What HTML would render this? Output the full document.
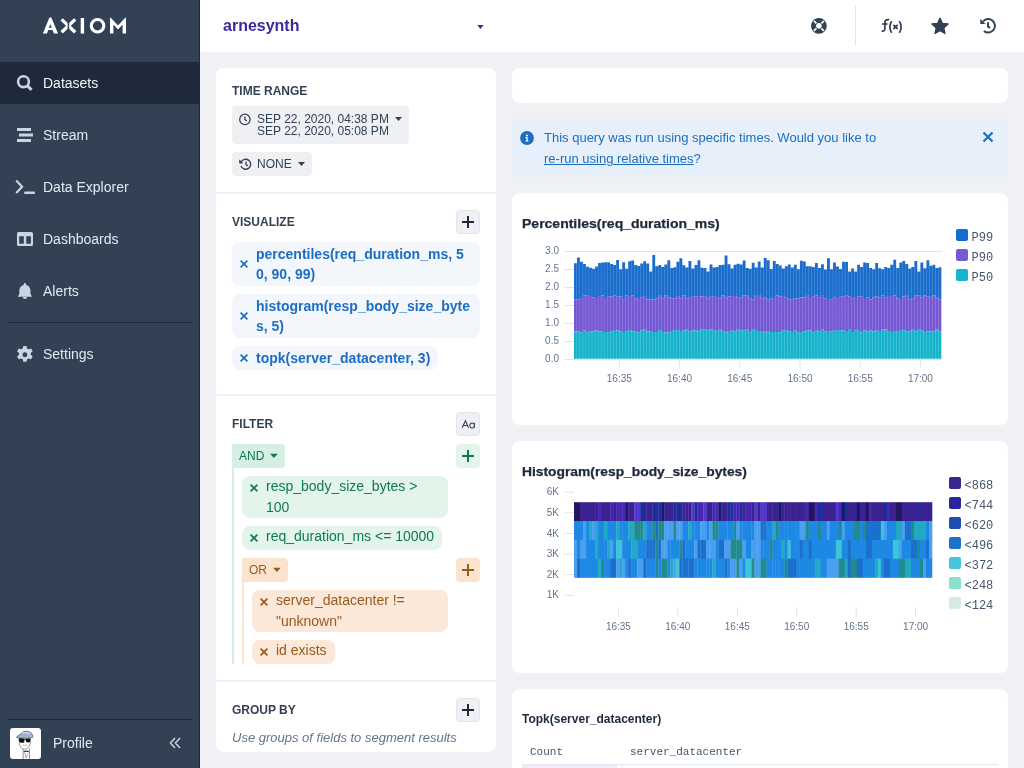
<!DOCTYPE html>
<html><head><meta charset="utf-8">
<style>
*{box-sizing:border-box;margin:0;padding:0}
html,body{width:1024px;height:768px;overflow:hidden;background:#eff1f5;font-family:"Liberation Sans", sans-serif;}
.abs{position:absolute}
.t{position:absolute;white-space:nowrap;line-height:1}
#side{position:absolute;left:0;top:0;width:200px;height:768px;background:#334155}
.nav{position:absolute;left:43px;font-size:14px;color:#e2e8f0;line-height:16px}
#head{position:absolute;left:200px;top:0;width:824px;height:52px;background:#fff}
.card{position:absolute;background:#fff;border-radius:8px}
.lbl{position:absolute;font-size:12px;font-weight:700;color:#334155;line-height:16px;left:232px}
.btn{position:absolute;background:#eef0f4;border-radius:4px}
.pbtn{position:absolute;width:24px;height:24px;border-radius:4px;background:#eef0f4;border:1px solid #e2e5ea}
.vchip{position:absolute;left:232px;background:#f3f7fc;border-radius:8px;color:#1b6ec2;font-weight:700;font-size:14px;line-height:20px}
.sep{position:absolute;left:216px;width:280px;height:2px;background:#eef0f4}
.ylab{position:absolute;font-size:10px;color:#64748b;line-height:12px;text-align:right;width:30px}
.xlab{position:absolute;font-size:10px;color:#64748b;line-height:12px;text-align:center;width:40px}
.leg{position:absolute;font-family:"Liberation Mono", monospace;font-size:12px;color:#475569;line-height:14px}
.sq{position:absolute;width:12px;height:12px;border-radius:2px}
</style></head><body>
<div id="root" style="position:absolute;left:0;top:0;width:1024px;height:768px;will-change:transform">
<div id="side">
  <svg class="abs" style="left:0;top:0" width="200" height="60">
    <path fill="#fff" fill-rule="evenodd" d="M42.9 33.6 L49.4 17.6 L51.3 17.6 L58 33.6 L53.9 33.6 L52.6 30 L48.2 30 L47 33.6 Z M50.35 24.2 L51.8 27.8 L48.9 27.8 Z"/>
    <defs><clipPath id="xl"><rect x="55" y="10" width="12.6" height="30"/></clipPath><clipPath id="xr"><rect x="69.2" y="10" width="12" height="30"/></clipPath></defs>
    <g stroke="#fff" stroke-width="3.3" fill="none" stroke-linejoin="miter">
      <path d="M61.6 19.4 L68.4 25.8 L61.6 32.2" clip-path="url(#xl)"/>
      <path d="M75.2 19.4 L68.4 25.8 L75.2 32.2" clip-path="url(#xr)"/>
    </g>
    <rect x="67.9" y="25.3" width="1" height="1" fill="#fff" opacity="0.45"/>
    <rect x="80.7" y="18" width="3.4" height="15.6" fill="#fff"/>
    <circle cx="97.55" cy="25.8" r="6.25" stroke="#fff" stroke-width="3.1" fill="none"/>
    <path d="M110 33.6 V17.8 H110.8 L118 25.4 L125.2 17.8 H126 V33.6 H122.6 V24.6 L118 29.6 L113.4 24.6 V33.6 Z" fill="#fff"/>
  </svg>
  <div class="abs" style="left:0;top:62px;width:200px;height:42px;background:#1e293b"></div>
  <svg class="abs" style="left:0;top:0" width="200" height="768">
    <g fill="none" stroke="#cbd5e1">
      <circle cx="23.5" cy="81.7" r="5.4" stroke-width="2.6"/>
      <path d="M27.5 85.7 L31.5 89.9" stroke-width="3"/>
      <path d="M16.8 186.8" />
      <path d="M16.2 180.6 L22.1 186.8 L16.2 193" stroke-width="2.2"/>
    </g>
    <g fill="#cbd5e1">
      <rect x="17" y="128" width="14" height="3"/>
      <rect x="19" y="133.5" width="14" height="3"/>
      <rect x="17" y="139" width="14" height="3"/>
      <rect x="24.1" y="191.6" width="10.9" height="2.3" rx="1"/>
      <path fill-rule="evenodd" d="M18.6 232 h12.8 a1.6 1.6 0 0 1 1.6 1.6 v10.8 a1.6 1.6 0 0 1 -1.6 1.6 h-12.8 a1.6 1.6 0 0 1 -1.6 -1.6 v-10.8 a1.6 1.6 0 0 1 1.6 -1.6 Z M19.2 236.2 v7.6 h4.6 v-7.6 Z M26.3 236.2 v7.6 h4.6 v-7.6 Z"/>
      <path d="M24.9 283 a1.2 1.2 0 0 1 1.2 1.2 v0.8 c2.8 0.6 4.4 3 4.4 6 v3 l1.5 2.8 h-14.2 l1.5 -2.8 v-3 c0 -3 1.6 -5.4 4.4 -6 v-0.8 a1.2 1.2 0 0 1 1.2 -1.2 Z M22.8 297 h4.2 a2.1 2.1 0 0 1 -4.2 0 Z"/>
      <g transform="translate(24.9 354.7) scale(1.1) translate(-24.9 -354)"><path fill-rule="evenodd" d="M23.4 346 h3 l0.5 2.3 l1.4 0.8 l2.2 -0.8 l1.5 2.6 l-1.8 1.5 v1.7 l1.8 1.5 l-1.5 2.6 l-2.2 -0.8 l-1.4 0.8 l-0.5 2.3 h-3 l-0.5 -2.3 l-1.4 -0.8 l-2.2 0.8 l-1.5 -2.6 l1.8 -1.5 v-1.7 l-1.8 -1.5 l1.5 -2.6 l2.2 0.8 l1.4 -0.8 Z M24.9 351.8 a2.2 2.2 0 1 0 0.001 0 Z"/></g>
    </g>
    <rect x="7" y="322" width="186" height="1" fill="#1e293b"/>
    <rect x="7" y="719" width="186" height="1" fill="#1e293b"/>
  </svg>
  <div class="nav" style="top:75px;color:#f1f5f9">Datasets</div>
  <div class="nav" style="top:127px">Stream</div>
  <div class="nav" style="top:179px">Data Explorer</div>
  <div class="nav" style="top:231px">Dashboards</div>
  <div class="nav" style="top:283px">Alerts</div>
  <div class="nav" style="top:346px">Settings</div>
  <div class="abs" style="left:10px;top:728px;width:31px;height:31px;background:#fff;border-radius:3px;overflow:hidden">
    <svg width="31" height="31">
      <path d="M6.4 9.6 C7.5 7.5 9 6.8 10.5 6.5 C11.5 4 14 3 17.5 3.4 C21 3.8 23 6 22.6 9.5 C20 10.5 12 10.2 6.4 9.6 Z" fill="#9fb4d2" stroke="#3d4f6e" stroke-width="0.7"/>
      <path d="M12 5 C14 4.2 18 4.5 20 6" fill="none" stroke="#dfe8f4" stroke-width="1"/>
      <path d="M8.5 10.5 C10 10 13 10.3 14.6 10.8 L14.2 14.2 C13 15 10 15 9.2 14 Z" fill="#111"/>
      <path d="M15.6 10.8 C17 10.4 19.5 10.3 20.8 10.8 L20.4 13.8 C19.5 14.6 17 14.6 16 13.8 Z" fill="#111"/>
      <path d="M14.4 11.5 H15.8" stroke="#111" stroke-width="1"/>
      <path d="M9.2 14.5 C9.5 18.5 11.5 21 14.5 21.2 C17.5 21.2 19.8 18.8 20.5 14" fill="none" stroke="#666" stroke-width="0.7"/>
      <path d="M12.6 16.8 C13.6 17.6 15.6 17.6 16.8 16.6" fill="none" stroke="#777" stroke-width="0.6"/>
      <path d="M13.2 21 V31 M19.5 20.5 V31" stroke="#666" stroke-width="0.7"/>
      <path d="M14 24 C15 22.8 17.5 22.8 18.8 24" fill="none" stroke="#2a3550" stroke-width="1.2"/>
      <path d="M15 25 L16 30 L17.5 26" fill="none" stroke="#8a96b0" stroke-width="0.8"/>
    </svg>
  </div>
  <div class="nav" style="left:53px;top:735px">Profile</div>
  <svg class="abs" style="left:168px;top:736px" width="14" height="14">
    <path d="M6.6 2.4 L2.4 7 L6.6 11.5 M11.6 2.4 L7.4 7 L11.6 11.5" fill="none" stroke="#cbd5e1" stroke-width="1.5" stroke-linecap="round" stroke-linejoin="round"/>
  </svg>
  <div class="abs" style="left:199px;top:0;width:1px;height:768px;background:#1e293b"></div>
</div>

<div id="head">
  <div class="t" style="left:23px;top:17px;font-size:16px;font-weight:700;color:#3b2a9e;line-height:18px">arnesynth</div>
  <svg class="abs" style="left:276px;top:23.5px" width="12" height="8"><path d="M1.3 1.1 h6.3 l-3.15 3.9 Z" fill="#3b2a9e"/></svg>
  <svg class="abs" style="left:600px;top:0" width="224" height="52">
    <g transform="translate(-800,0)">
      <path fill="#334155" fill-rule="evenodd" d="M818.9 18 a7.85 7.85 0 1 0 0.001 0 Z M818.9 23 a2.9 2.9 0 1 1 -0.001 0 Z"/>
      <g stroke="#fff" stroke-width="1.7">
        <path d="M813.9 20.9 L816.4 23.4 M823.9 20.9 L821.4 23.4 M813.9 30.9 L816.4 28.4 M823.9 30.9 L821.4 28.4"/>
      </g>
      <rect x="855" y="6" width="1" height="40" fill="#e4e4ec"/>
      <g fill="none" stroke="#334155" stroke-width="1.7" stroke-linecap="round">
        <path d="M888.6 19.6 C886.2 19.4 884.9 20.6 884.9 22.6 V28.6 C884.9 30.6 883.8 31.3 882.4 31.2"/>
        <path d="M882.2 24 H887.5" stroke-linecap="butt"/>
        <path d="M891.4 21.8 C889.4 24.5 889.4 29.5 891.4 32.2"/>
        <path d="M899.6 21.8 C901.6 24.5 901.6 29.5 899.6 32.2"/>
        <path d="M893.9 25.4 L897.1 28.4 M897.1 25.4 L893.9 28.4" stroke-width="1.9"/>
      </g>
      <path fill="#334155" stroke="#334155" stroke-width="1.2" stroke-linejoin="round" d="M940.00 18.00 L942.41 23.28 L948.18 23.94 L943.90 27.87 L945.05 33.56 L940.00 30.70 L934.95 33.56 L936.10 27.87 L931.82 23.94 L937.59 23.28 Z"/>
      <g fill="none" stroke="#334155" stroke-width="2">
        <path d="M983.2 21.4 A6.7 6.7 0 1 1 983.9 30.9"/>
        <path d="M988 22.3 V26.4 L990 28"/>
      </g>
      <path d="M980.3 18.8 L980.3 24 L985.6 24 Z" fill="#334155"/>
    </g>
  </svg>
</div>

<!-- left card -->
<div class="card" style="left:216px;top:68px;width:280px;height:684px"></div>
<div class="lbl" style="top:83px">TIME RANGE</div>
<div class="btn" style="left:232px;top:106px;width:177px;height:38px"></div>
<svg class="abs" style="left:236px;top:111px" width="16" height="16"><circle cx="8.9" cy="8.4" r="5.2" fill="none" stroke="#334155" stroke-width="1.25"/><path d="M8.9 5.6 V8.6 L10.9 10" fill="none" stroke="#334155" stroke-width="1.2"/></svg>
<div class="t" style="left:257px;top:113px;font-size:12px;color:#334155;line-height:12px">SEP 22, 2020, 04:38 PM<br>SEP 22, 2020, 05:08 PM</div>
<svg class="abs" style="left:394px;top:116.4px" width="10" height="6"><path d="M1 1 h7 l-3.5 4 Z" fill="#334155"/></svg>
<div class="btn" style="left:232px;top:152px;width:80px;height:24px"></div>
<svg class="abs" style="left:236.5px;top:155.5px" width="16" height="16"><path d="M4.2 6 A5 5 0 1 1 4 10" fill="none" stroke="#334155" stroke-width="1.4"/><path d="M2.2 3.2 L2.2 7.4 L6.2 7.4 Z" fill="#334155"/><path d="M9 5.6 V8.6 L11 10" fill="none" stroke="#334155" stroke-width="1.3"/></svg>
<div class="t" style="left:257px;top:157.5px;font-size:12px;color:#334155;line-height:12px">NONE</div>
<svg class="abs" style="left:296.5px;top:161px" width="10" height="6"><path d="M1 1 h7 l-3.5 4 Z" fill="#334155"/></svg>
<div class="sep" style="top:192px"></div>

<div class="lbl" style="top:214px">VISUALIZE</div>
<div class="pbtn" style="left:456px;top:210px"></div>
<svg class="abs" style="left:456px;top:210px" width="24" height="24"><path d="M12 6 V18 M6 12 H18" stroke="#1e293b" stroke-width="2"/></svg>
<div class="vchip" style="top:242px;width:248px;height:44px"></div>
<div class="vchip" style="top:294px;width:248px;height:44px"></div>
<div class="vchip" style="top:346px;width:206px;height:24px"></div>
<svg class="abs" style="left:232px;top:242px" width="30" height="130">
  <g stroke="#1b6ec2" stroke-width="1.7">
    <path d="M8.6 18.6 L15.4 25.4 M15.4 18.6 L8.6 25.4"/>
    <path d="M8.6 70.6 L15.4 77.4 M15.4 70.6 L8.6 77.4"/>
    <path d="M8.6 112.6 L15.4 119.4 M15.4 112.6 L8.6 119.4"/>
  </g>
</svg>
<div class="t" style="left:256px;top:244px;font-size:14px;font-weight:700;color:#1b6ec2;line-height:20px">percentiles(req_duration_ms, 5<br>0, 90, 99)</div>
<div class="t" style="left:256px;top:296px;font-size:14px;font-weight:700;color:#1b6ec2;line-height:20px">histogram(resp_body_size_byte<br>s, 5)</div>
<div class="t" style="left:256px;top:348px;font-size:14px;font-weight:700;color:#1b6ec2;line-height:20px">topk(server_datacenter, 3)</div>
<div class="sep" style="top:394px"></div>

<div class="lbl" style="top:416px">FILTER</div>
<div class="pbtn" style="left:456px;top:412px"></div>
<svg class="abs" style="left:456px;top:412px" width="24" height="24"><g fill="none" stroke="#334155" stroke-width="1.05"><path d="M6.2 15.8 L9.4 8.8 L12.6 15.8 M7.4 13.4 H11.4"/><path d="M18.4 10.8 V15.8 M18.4 13.3 A2.3 2.5 0 1 1 18.39 13.2"/></g></svg>
<div class="abs" style="left:232px;top:444px;width:53px;height:24px;background:#d5efe2;border-radius:0 4px 4px 0"></div>
<div class="t" style="left:239px;top:450px;font-size:12px;color:#0f7b4d;line-height:12px">AND</div>
<svg class="abs" style="left:269.4px;top:453.2px" width="10" height="6"><path d="M1 0.8 h7.8 l-3.9 4.3 Z" fill="#0f7b4d"/></svg>
<div class="abs" style="left:456px;top:444px;width:24px;height:24px;background:#e3f4ea;border-radius:4px"></div>
<svg class="abs" style="left:456px;top:444px" width="24" height="24"><path d="M12 6 V18 M6 12 H18" stroke="#0f7b4d" stroke-width="2"/></svg>
<div class="abs" style="left:232px;top:468px;width:2px;height:196px;background:#d5efe2"></div>
<div class="abs" style="left:242px;top:476px;width:206px;height:42px;background:#e3f4ea;border-radius:8px"></div>
<div class="abs" style="left:242px;top:526px;width:200px;height:24px;background:#e3f4ea;border-radius:8px"></div>
<svg class="abs" style="left:242px;top:476px" width="24" height="80"><g stroke="#0f7b4d" stroke-width="1.7"><path d="M8.6 8.6 L15.4 15.4 M15.4 8.6 L8.6 15.4"/><path d="M8.6 58.6 L15.4 65.4 M15.4 58.6 L8.6 65.4"/></g></svg>
<div class="t" style="left:266px;top:476px;font-size:14px;color:#0f7b4d;line-height:20px">resp_body_size_bytes &gt;</div>
<div class="t" style="left:266px;top:497px;font-size:14px;color:#0f7b4d;line-height:20px">100</div>
<div class="t" style="left:266px;top:526px;font-size:14px;color:#0f7b4d;line-height:20px">req_duration_ms &lt;= 10000</div>
<div class="abs" style="left:242px;top:558px;width:46px;height:24px;background:#fbe3cd;border-radius:0 4px 4px 0"></div>
<div class="t" style="left:249px;top:564px;font-size:12px;color:#9a5a1e;line-height:12px">OR</div>
<svg class="abs" style="left:271.9px;top:567.3px" width="10" height="6"><path d="M1 0.8 h7.8 l-3.9 4.3 Z" fill="#9a5a1e"/></svg>
<div class="abs" style="left:456px;top:558px;width:24px;height:24px;background:#fbe3cd;border-radius:4px"></div>
<svg class="abs" style="left:456px;top:558px" width="24" height="24"><path d="M12 6 V18 M6 12 H18" stroke="#9a5a1e" stroke-width="2"/></svg>
<div class="abs" style="left:242px;top:582px;width:2px;height:82px;background:#fbe3cd"></div>
<div class="abs" style="left:252px;top:590px;width:196px;height:42px;background:#fbe8d8;border-radius:8px"></div>
<div class="abs" style="left:252px;top:640px;width:83px;height:24px;background:#fbe8d8;border-radius:8px"></div>
<svg class="abs" style="left:252px;top:590px" width="24" height="80"><g stroke="#9a5a1e" stroke-width="1.7"><path d="M8.6 8.6 L15.4 15.4 M15.4 8.6 L8.6 15.4"/><path d="M8.6 58.6 L15.4 65.4 M15.4 58.6 L8.6 65.4"/></g></svg>
<div class="t" style="left:276px;top:590px;font-size:14px;color:#9a5a1e;line-height:20px">server_datacenter !=</div>
<div class="t" style="left:276px;top:611px;font-size:14px;color:#9a5a1e;line-height:20px">"unknown"</div>
<div class="t" style="left:276px;top:640px;font-size:14px;color:#9a5a1e;line-height:20px">id exists</div>
<div class="sep" style="top:680px"></div>

<div class="lbl" style="top:702px">GROUP BY</div>
<div class="pbtn" style="left:456px;top:698px"></div>
<svg class="abs" style="left:456px;top:698px" width="24" height="24"><path d="M12 6 V18 M6 12 H18" stroke="#1e293b" stroke-width="2"/></svg>
<div class="t" style="left:232px;top:731px;font-size:13px;font-style:italic;color:#64748b;line-height:14px">Use groups of fields to segment results</div>

<!-- right column -->
<div class="card" style="left:512px;top:68px;width:496px;height:35px"></div>
<div class="abs" style="left:512px;top:119px;width:496px;height:58px;background:#e7f0fa;border-radius:8px"></div>
<svg class="abs" style="left:519px;top:130px" width="16" height="16"><circle cx="8" cy="8" r="6.9" fill="#1b6ec2"/><path d="M6.4 7.1 H8.7 V10.6 H9.5 V11.6 H6.5 V10.6 H7.3 V8.1 H6.4 Z" fill="#fff"/><circle cx="7.9" cy="5.5" r="1" fill="#fff"/></svg>
<div class="t" style="left:544px;top:130px;font-size:13px;color:#1b6ec2;line-height:16px">This query was run using specific times. Would you like to</div>
<div class="t" style="left:544px;top:151px;font-size:13px;color:#1b6ec2;line-height:16px"><span style="text-decoration:underline">re-run using relative times</span>?</div>
<svg class="abs" style="left:980px;top:129px" width="16" height="16"><path d="M3.5 3.5 L12.5 12.5 M12.5 3.5 L3.5 12.5" stroke="#1b6ec2" stroke-width="2.2"/></svg>

<div class="card" style="left:512px;top:193px;width:496px;height:232px"></div>
<div class="t" style="left:522px;top:215.5px;font-size:12px;font-weight:700;color:#1e293b;line-height:16px;transform:scaleX(1.167);transform-origin:0 0;-webkit-text-stroke:0.25px #1e293b">Percentiles(req_duration_ms)</div>
<svg width="1024" height="768" style="position:absolute;left:0;top:0"><rect x="564.5" y="359" width="377" height="1" fill="#e3e3e3"/><rect x="564.5" y="341" width="377" height="1" fill="#e3e3e3"/><rect x="564.5" y="323" width="377" height="1" fill="#e3e3e3"/><rect x="564.5" y="305" width="377" height="1" fill="#e3e3e3"/><rect x="564.5" y="287" width="377" height="1" fill="#e3e3e3"/><rect x="564.5" y="269" width="377" height="1" fill="#e3e3e3"/><rect x="564.5" y="251" width="377" height="1" fill="#e3e3e3"/><path d="M574.00 263.3h2.86V299.3h-2.86ZM577.01 257.4h2.86V299.7h-2.86ZM580.02 261.7h2.86V297.9h-2.86ZM583.04 264.0h2.86V295.2h-2.86ZM586.05 266.7h2.86V295.7h-2.86ZM589.06 267.7h2.86V295.9h-2.86ZM592.07 268.8h2.86V297.3h-2.86ZM595.09 266.5h2.86V297.9h-2.86ZM598.10 262.9h2.86V296.0h-2.86ZM601.11 262.6h2.86V295.6h-2.86ZM604.12 262.3h2.86V297.9h-2.86ZM607.14 262.3h2.86V296.7h-2.86ZM610.15 263.9h2.86V296.5h-2.86ZM613.16 265.0h2.86V295.3h-2.86ZM616.17 260.1h2.86V296.8h-2.86ZM619.18 269.2h2.86V296.6h-2.86ZM622.20 262.2h2.86V299.7h-2.86ZM625.21 268.7h2.86V295.6h-2.86ZM628.22 261.3h2.86V295.9h-2.86ZM631.23 260.5h2.86V295.6h-2.86ZM634.25 264.9h2.86V298.8h-2.86ZM637.26 266.0h2.86V297.9h-2.86ZM640.27 263.6h2.86V297.4h-2.86ZM643.28 261.2h2.86V296.1h-2.86ZM646.30 263.5h2.86V299.5h-2.86ZM649.31 271.6h2.86V299.2h-2.86ZM652.32 255.0h2.86V299.5h-2.86ZM655.33 266.2h2.86V298.7h-2.86ZM658.34 265.1h2.86V295.0h-2.86ZM661.36 266.9h2.86V298.3h-2.86ZM664.37 264.5h2.86V295.2h-2.86ZM667.38 260.3h2.86V297.4h-2.86ZM670.39 267.9h2.86V298.2h-2.86ZM673.41 267.3h2.86V298.4h-2.86ZM676.42 261.8h2.86V296.0h-2.86ZM679.43 258.2h2.86V298.2h-2.86ZM682.44 265.2h2.86V295.2h-2.86ZM685.45 267.4h2.86V298.2h-2.86ZM688.47 261.0h2.86V296.9h-2.86ZM691.48 268.6h2.86V296.0h-2.86ZM694.49 264.9h2.86V296.2h-2.86ZM697.50 260.3h2.86V296.0h-2.86ZM700.52 267.8h2.86V296.4h-2.86ZM703.53 268.1h2.86V296.0h-2.86ZM706.54 271.6h2.86V298.3h-2.86ZM709.55 264.5h2.86V296.7h-2.86ZM712.57 267.4h2.86V295.9h-2.86ZM715.58 267.0h2.86V297.1h-2.86ZM718.59 265.1h2.86V298.2h-2.86ZM721.60 264.7h2.86V295.4h-2.86ZM724.61 255.4h2.86V297.8h-2.86ZM727.63 264.2h2.86V296.4h-2.86ZM730.64 268.4h2.86V296.1h-2.86ZM733.65 264.7h2.86V296.1h-2.86ZM736.66 263.7h2.86V297.8h-2.86ZM739.68 264.4h2.86V297.7h-2.86ZM742.69 260.6h2.86V295.6h-2.86ZM745.70 268.1h2.86V295.8h-2.86ZM748.71 268.7h2.86V298.8h-2.86ZM751.73 262.7h2.86V299.2h-2.86ZM754.74 267.4h2.86V295.1h-2.86ZM757.75 261.6h2.86V295.0h-2.86ZM760.76 267.6h2.86V298.3h-2.86ZM763.77 257.9h2.86V297.2h-2.86ZM766.79 260.2h2.86V299.7h-2.86ZM769.80 269.0h2.86V298.7h-2.86ZM772.81 260.9h2.86V297.9h-2.86ZM775.82 264.1h2.86V295.4h-2.86ZM778.84 265.4h2.86V296.6h-2.86ZM781.85 268.6h2.86V296.0h-2.86ZM784.86 266.2h2.86V297.7h-2.86ZM787.87 264.5h2.86V299.4h-2.86ZM790.89 267.5h2.86V299.8h-2.86ZM793.90 264.7h2.86V298.6h-2.86ZM796.91 269.3h2.86V298.8h-2.86ZM799.92 260.7h2.86V297.6h-2.86ZM802.93 261.6h2.86V297.5h-2.86ZM805.95 266.2h2.86V295.1h-2.86ZM808.96 266.2h2.86V298.0h-2.86ZM811.97 267.0h2.86V296.3h-2.86ZM814.98 263.1h2.86V295.6h-2.86ZM818.00 267.9h2.86V297.7h-2.86ZM821.01 264.3h2.86V295.1h-2.86ZM824.02 269.4h2.86V298.2h-2.86ZM827.03 258.3h2.86V299.0h-2.86ZM830.05 269.2h2.86V299.8h-2.86ZM833.06 262.4h2.86V297.4h-2.86ZM836.07 266.4h2.86V298.1h-2.86ZM839.08 269.0h2.86V296.8h-2.86ZM842.09 261.8h2.86V296.3h-2.86ZM845.11 261.9h2.86V295.8h-2.86ZM848.12 271.6h2.86V296.6h-2.86ZM851.13 268.4h2.86V298.2h-2.86ZM854.14 271.6h2.86V296.9h-2.86ZM857.16 264.7h2.86V296.2h-2.86ZM860.17 267.1h2.86V296.3h-2.86ZM863.18 262.5h2.86V299.0h-2.86ZM866.19 263.0h2.86V297.6h-2.86ZM869.20 268.0h2.86V299.6h-2.86ZM872.22 269.3h2.86V297.2h-2.86ZM875.23 263.1h2.86V296.5h-2.86ZM878.24 268.3h2.86V297.7h-2.86ZM881.25 269.3h2.86V295.3h-2.86ZM884.27 266.9h2.86V297.8h-2.86ZM887.28 268.1h2.86V297.1h-2.86ZM890.29 264.7h2.86V295.9h-2.86ZM893.30 259.7h2.86V295.5h-2.86ZM896.32 268.1h2.86V298.5h-2.86ZM899.33 262.4h2.86V300.0h-2.86ZM902.34 261.0h2.86V296.4h-2.86ZM905.35 263.9h2.86V295.0h-2.86ZM908.36 268.5h2.86V299.8h-2.86ZM911.38 266.9h2.86V298.8h-2.86ZM914.39 261.1h2.86V295.2h-2.86ZM917.40 271.6h2.86V295.3h-2.86ZM920.41 262.4h2.86V297.7h-2.86ZM923.43 268.2h2.86V295.3h-2.86ZM926.44 260.3h2.86V296.3h-2.86ZM929.45 265.7h2.86V297.2h-2.86ZM932.46 264.8h2.86V295.5h-2.86ZM935.48 268.1h2.86V297.8h-2.86ZM938.49 267.2h2.86V299.6h-2.86Z" fill="#1a6dcc"/><path d="M574.00 299.3h2.86V331.5h-2.86ZM577.01 299.7h2.86V331.4h-2.86ZM580.02 297.9h2.86V332.2h-2.86ZM583.04 295.2h2.86V330.6h-2.86ZM586.05 295.7h2.86V332.3h-2.86ZM589.06 295.9h2.86V331.5h-2.86ZM592.07 297.3h2.86V331.3h-2.86ZM595.09 297.9h2.86V330.5h-2.86ZM598.10 296.0h2.86V331.6h-2.86ZM601.11 295.6h2.86V330.9h-2.86ZM604.12 297.9h2.86V332.1h-2.86ZM607.14 296.7h2.86V332.3h-2.86ZM610.15 296.5h2.86V331.5h-2.86ZM613.16 295.3h2.86V330.0h-2.86ZM616.17 296.8h2.86V330.4h-2.86ZM619.18 296.6h2.86V331.3h-2.86ZM622.20 299.7h2.86V332.1h-2.86ZM625.21 295.6h2.86V331.3h-2.86ZM628.22 295.9h2.86V329.9h-2.86ZM631.23 295.6h2.86V331.4h-2.86ZM634.25 298.8h2.86V331.8h-2.86ZM637.26 297.9h2.86V332.4h-2.86ZM640.27 297.4h2.86V330.4h-2.86ZM643.28 296.1h2.86V329.8h-2.86ZM646.30 299.5h2.86V331.3h-2.86ZM649.31 299.2h2.86V331.8h-2.86ZM652.32 299.5h2.86V332.0h-2.86ZM655.33 298.7h2.86V332.0h-2.86ZM658.34 295.0h2.86V330.0h-2.86ZM661.36 298.3h2.86V332.1h-2.86ZM664.37 295.2h2.86V332.4h-2.86ZM667.38 297.4h2.86V332.3h-2.86ZM670.39 298.2h2.86V331.7h-2.86ZM673.41 298.4h2.86V330.2h-2.86ZM676.42 296.0h2.86V330.0h-2.86ZM679.43 298.2h2.86V330.9h-2.86ZM682.44 295.2h2.86V330.4h-2.86ZM685.45 298.2h2.86V329.7h-2.86ZM688.47 296.9h2.86V331.8h-2.86ZM691.48 296.0h2.86V330.5h-2.86ZM694.49 296.2h2.86V330.2h-2.86ZM697.50 296.0h2.86V331.5h-2.86ZM700.52 296.4h2.86V329.7h-2.86ZM703.53 296.0h2.86V329.8h-2.86ZM706.54 298.3h2.86V330.5h-2.86ZM709.55 296.7h2.86V329.6h-2.86ZM712.57 295.9h2.86V329.9h-2.86ZM715.58 297.1h2.86V331.7h-2.86ZM718.59 298.2h2.86V329.8h-2.86ZM721.60 295.4h2.86V331.2h-2.86ZM724.61 297.8h2.86V332.4h-2.86ZM727.63 296.4h2.86V331.1h-2.86ZM730.64 296.1h2.86V330.8h-2.86ZM733.65 296.1h2.86V331.6h-2.86ZM736.66 297.8h2.86V329.8h-2.86ZM739.68 297.7h2.86V330.4h-2.86ZM742.69 295.6h2.86V330.4h-2.86ZM745.70 295.8h2.86V329.7h-2.86ZM748.71 298.8h2.86V332.2h-2.86ZM751.73 299.2h2.86V329.8h-2.86ZM754.74 295.1h2.86V329.9h-2.86ZM757.75 295.0h2.86V331.0h-2.86ZM760.76 298.3h2.86V330.9h-2.86ZM763.77 297.2h2.86V332.4h-2.86ZM766.79 299.7h2.86V330.9h-2.86ZM769.80 298.7h2.86V332.1h-2.86ZM772.81 297.9h2.86V332.0h-2.86ZM775.82 295.4h2.86V332.0h-2.86ZM778.84 296.6h2.86V332.3h-2.86ZM781.85 296.0h2.86V330.6h-2.86ZM784.86 297.7h2.86V329.9h-2.86ZM787.87 299.4h2.86V331.6h-2.86ZM790.89 299.8h2.86V332.0h-2.86ZM793.90 298.6h2.86V330.2h-2.86ZM796.91 298.8h2.86V332.4h-2.86ZM799.92 297.6h2.86V331.9h-2.86ZM802.93 297.5h2.86V331.2h-2.86ZM805.95 295.1h2.86V330.4h-2.86ZM808.96 298.0h2.86V330.6h-2.86ZM811.97 296.3h2.86V332.2h-2.86ZM814.98 295.6h2.86V330.0h-2.86ZM818.00 297.7h2.86V331.6h-2.86ZM821.01 295.1h2.86V329.7h-2.86ZM824.02 298.2h2.86V331.5h-2.86ZM827.03 299.0h2.86V331.0h-2.86ZM830.05 299.8h2.86V331.3h-2.86ZM833.06 297.4h2.86V330.7h-2.86ZM836.07 298.1h2.86V329.9h-2.86ZM839.08 296.8h2.86V330.3h-2.86ZM842.09 296.3h2.86V330.6h-2.86ZM845.11 295.8h2.86V331.0h-2.86ZM848.12 296.6h2.86V329.8h-2.86ZM851.13 298.2h2.86V332.0h-2.86ZM854.14 296.9h2.86V330.6h-2.86ZM857.16 296.2h2.86V330.1h-2.86ZM860.17 296.3h2.86V332.2h-2.86ZM863.18 299.0h2.86V330.3h-2.86ZM866.19 297.6h2.86V331.3h-2.86ZM869.20 299.6h2.86V330.6h-2.86ZM872.22 297.2h2.86V331.5h-2.86ZM875.23 296.5h2.86V330.5h-2.86ZM878.24 297.7h2.86V331.1h-2.86ZM881.25 295.3h2.86V329.6h-2.86ZM884.27 297.8h2.86V329.6h-2.86ZM887.28 297.1h2.86V331.8h-2.86ZM890.29 295.9h2.86V332.0h-2.86ZM893.30 295.5h2.86V331.8h-2.86ZM896.32 298.5h2.86V331.1h-2.86ZM899.33 300.0h2.86V330.0h-2.86ZM902.34 296.4h2.86V329.8h-2.86ZM905.35 295.0h2.86V331.3h-2.86ZM908.36 299.8h2.86V331.6h-2.86ZM911.38 298.8h2.86V329.7h-2.86ZM914.39 295.2h2.86V331.3h-2.86ZM917.40 295.3h2.86V329.8h-2.86ZM920.41 297.7h2.86V330.3h-2.86ZM923.43 295.3h2.86V332.3h-2.86ZM926.44 296.3h2.86V331.6h-2.86ZM929.45 297.2h2.86V331.6h-2.86ZM932.46 295.5h2.86V331.8h-2.86ZM935.48 297.8h2.86V329.6h-2.86ZM938.49 299.6h2.86V331.4h-2.86Z" fill="#7559d4"/><path d="M574.00 331.5h2.86V358.7h-2.86ZM577.01 331.4h2.86V358.7h-2.86ZM580.02 332.2h2.86V358.7h-2.86ZM583.04 330.6h2.86V358.7h-2.86ZM586.05 332.3h2.86V358.7h-2.86ZM589.06 331.5h2.86V358.7h-2.86ZM592.07 331.3h2.86V358.7h-2.86ZM595.09 330.5h2.86V358.7h-2.86ZM598.10 331.6h2.86V358.7h-2.86ZM601.11 330.9h2.86V358.7h-2.86ZM604.12 332.1h2.86V358.7h-2.86ZM607.14 332.3h2.86V358.7h-2.86ZM610.15 331.5h2.86V358.7h-2.86ZM613.16 330.0h2.86V358.7h-2.86ZM616.17 330.4h2.86V358.7h-2.86ZM619.18 331.3h2.86V358.7h-2.86ZM622.20 332.1h2.86V358.7h-2.86ZM625.21 331.3h2.86V358.7h-2.86ZM628.22 329.9h2.86V358.7h-2.86ZM631.23 331.4h2.86V358.7h-2.86ZM634.25 331.8h2.86V358.7h-2.86ZM637.26 332.4h2.86V358.7h-2.86ZM640.27 330.4h2.86V358.7h-2.86ZM643.28 329.8h2.86V358.7h-2.86ZM646.30 331.3h2.86V358.7h-2.86ZM649.31 331.8h2.86V358.7h-2.86ZM652.32 332.0h2.86V358.7h-2.86ZM655.33 332.0h2.86V358.7h-2.86ZM658.34 330.0h2.86V358.7h-2.86ZM661.36 332.1h2.86V358.7h-2.86ZM664.37 332.4h2.86V358.7h-2.86ZM667.38 332.3h2.86V358.7h-2.86ZM670.39 331.7h2.86V358.7h-2.86ZM673.41 330.2h2.86V358.7h-2.86ZM676.42 330.0h2.86V358.7h-2.86ZM679.43 330.9h2.86V358.7h-2.86ZM682.44 330.4h2.86V358.7h-2.86ZM685.45 329.7h2.86V358.7h-2.86ZM688.47 331.8h2.86V358.7h-2.86ZM691.48 330.5h2.86V358.7h-2.86ZM694.49 330.2h2.86V358.7h-2.86ZM697.50 331.5h2.86V358.7h-2.86ZM700.52 329.7h2.86V358.7h-2.86ZM703.53 329.8h2.86V358.7h-2.86ZM706.54 330.5h2.86V358.7h-2.86ZM709.55 329.6h2.86V358.7h-2.86ZM712.57 329.9h2.86V358.7h-2.86ZM715.58 331.7h2.86V358.7h-2.86ZM718.59 329.8h2.86V358.7h-2.86ZM721.60 331.2h2.86V358.7h-2.86ZM724.61 332.4h2.86V358.7h-2.86ZM727.63 331.1h2.86V358.7h-2.86ZM730.64 330.8h2.86V358.7h-2.86ZM733.65 331.6h2.86V358.7h-2.86ZM736.66 329.8h2.86V358.7h-2.86ZM739.68 330.4h2.86V358.7h-2.86ZM742.69 330.4h2.86V358.7h-2.86ZM745.70 329.7h2.86V358.7h-2.86ZM748.71 332.2h2.86V358.7h-2.86ZM751.73 329.8h2.86V358.7h-2.86ZM754.74 329.9h2.86V358.7h-2.86ZM757.75 331.0h2.86V358.7h-2.86ZM760.76 330.9h2.86V358.7h-2.86ZM763.77 332.4h2.86V358.7h-2.86ZM766.79 330.9h2.86V358.7h-2.86ZM769.80 332.1h2.86V358.7h-2.86ZM772.81 332.0h2.86V358.7h-2.86ZM775.82 332.0h2.86V358.7h-2.86ZM778.84 332.3h2.86V358.7h-2.86ZM781.85 330.6h2.86V358.7h-2.86ZM784.86 329.9h2.86V358.7h-2.86ZM787.87 331.6h2.86V358.7h-2.86ZM790.89 332.0h2.86V358.7h-2.86ZM793.90 330.2h2.86V358.7h-2.86ZM796.91 332.4h2.86V358.7h-2.86ZM799.92 331.9h2.86V358.7h-2.86ZM802.93 331.2h2.86V358.7h-2.86ZM805.95 330.4h2.86V358.7h-2.86ZM808.96 330.6h2.86V358.7h-2.86ZM811.97 332.2h2.86V358.7h-2.86ZM814.98 330.0h2.86V358.7h-2.86ZM818.00 331.6h2.86V358.7h-2.86ZM821.01 329.7h2.86V358.7h-2.86ZM824.02 331.5h2.86V358.7h-2.86ZM827.03 331.0h2.86V358.7h-2.86ZM830.05 331.3h2.86V358.7h-2.86ZM833.06 330.7h2.86V358.7h-2.86ZM836.07 329.9h2.86V358.7h-2.86ZM839.08 330.3h2.86V358.7h-2.86ZM842.09 330.6h2.86V358.7h-2.86ZM845.11 331.0h2.86V358.7h-2.86ZM848.12 329.8h2.86V358.7h-2.86ZM851.13 332.0h2.86V358.7h-2.86ZM854.14 330.6h2.86V358.7h-2.86ZM857.16 330.1h2.86V358.7h-2.86ZM860.17 332.2h2.86V358.7h-2.86ZM863.18 330.3h2.86V358.7h-2.86ZM866.19 331.3h2.86V358.7h-2.86ZM869.20 330.6h2.86V358.7h-2.86ZM872.22 331.5h2.86V358.7h-2.86ZM875.23 330.5h2.86V358.7h-2.86ZM878.24 331.1h2.86V358.7h-2.86ZM881.25 329.6h2.86V358.7h-2.86ZM884.27 329.6h2.86V358.7h-2.86ZM887.28 331.8h2.86V358.7h-2.86ZM890.29 332.0h2.86V358.7h-2.86ZM893.30 331.8h2.86V358.7h-2.86ZM896.32 331.1h2.86V358.7h-2.86ZM899.33 330.0h2.86V358.7h-2.86ZM902.34 329.8h2.86V358.7h-2.86ZM905.35 331.3h2.86V358.7h-2.86ZM908.36 331.6h2.86V358.7h-2.86ZM911.38 329.7h2.86V358.7h-2.86ZM914.39 331.3h2.86V358.7h-2.86ZM917.40 329.8h2.86V358.7h-2.86ZM920.41 330.3h2.86V358.7h-2.86ZM923.43 332.3h2.86V358.7h-2.86ZM926.44 331.6h2.86V358.7h-2.86ZM929.45 331.6h2.86V358.7h-2.86ZM932.46 331.8h2.86V358.7h-2.86ZM935.48 329.6h2.86V358.7h-2.86ZM938.49 331.4h2.86V358.7h-2.86Z" fill="#17b3cc"/><rect x="618.8" y="359" width="1" height="8" fill="#e3e3e3"/><rect x="679.0" y="359" width="1" height="8" fill="#e3e3e3"/><rect x="739.2" y="359" width="1" height="8" fill="#e3e3e3"/><rect x="799.5" y="359" width="1" height="8" fill="#e3e3e3"/><rect x="859.7" y="359" width="1" height="8" fill="#e3e3e3"/><rect x="919.9" y="359" width="1" height="8" fill="#e3e3e3"/></svg>
<div class="ylab" style="left:529px;top:352.7px">0.0</div>
<div class="ylab" style="left:529px;top:334.7px">0.5</div>
<div class="ylab" style="left:529px;top:316.7px">1.0</div>
<div class="ylab" style="left:529px;top:298.7px">1.5</div>
<div class="ylab" style="left:529px;top:280.7px">2.0</div>
<div class="ylab" style="left:529px;top:262.7px">2.5</div>
<div class="ylab" style="left:529px;top:244.7px">3.0</div>
<div class="xlab" style="left:599.3px;top:373px">16:35</div>
<div class="xlab" style="left:659.5px;top:373px">16:40</div>
<div class="xlab" style="left:719.7px;top:373px">16:45</div>
<div class="xlab" style="left:780.0px;top:373px">16:50</div>
<div class="xlab" style="left:840.2px;top:373px">16:55</div>
<div class="xlab" style="left:900.4px;top:373px">17:00</div>
<div class="sq" style="left:956px;top:229px;background:#136dcc"></div><div class="leg" style="left:971.5px;top:231px">P99</div>
<div class="sq" style="left:956px;top:249px;background:#745ccf"></div><div class="leg" style="left:971.5px;top:251px">P90</div>
<div class="sq" style="left:956px;top:269px;background:#13b4cc"></div><div class="leg" style="left:971.5px;top:271px">P50</div>

<div class="card" style="left:512px;top:441px;width:496px;height:232px"></div>
<div class="t" style="left:522px;top:463.5px;font-size:12px;font-weight:700;color:#1e293b;line-height:16px;transform:scaleX(1.151);transform-origin:0 0;-webkit-text-stroke:0.25px #1e293b">Histogram(resp_body_size_bytes)</div>
<svg width="1024" height="768" style="position:absolute;left:0;top:0"><rect x="574.00" y="502.20" width="6.32" height="19.13" fill="#221660"/><rect x="580.02" y="502.20" width="9.33" height="19.13" fill="#3a2391"/><rect x="589.04" y="502.20" width="6.32" height="19.13" fill="#3a2391"/><rect x="595.06" y="502.20" width="3.31" height="19.13" fill="#3a2391"/><rect x="598.07" y="502.20" width="3.31" height="19.13" fill="#4628b0"/><rect x="601.08" y="502.20" width="9.33" height="19.13" fill="#3a2391"/><rect x="610.10" y="502.20" width="3.31" height="19.13" fill="#4628b0"/><rect x="613.11" y="502.20" width="3.31" height="19.13" fill="#3a2391"/><rect x="616.12" y="502.20" width="6.32" height="19.13" fill="#4628b0"/><rect x="622.13" y="502.20" width="3.31" height="19.13" fill="#4628b0"/><rect x="625.14" y="502.20" width="3.31" height="19.13" fill="#221660"/><rect x="628.15" y="502.20" width="6.32" height="19.13" fill="#3a2391"/><rect x="634.17" y="502.20" width="6.32" height="19.13" fill="#5237d2"/><rect x="640.18" y="502.20" width="6.32" height="19.13" fill="#1f2c9c"/><rect x="646.20" y="502.20" width="6.32" height="19.13" fill="#3a2391"/><rect x="652.22" y="502.20" width="6.32" height="19.13" fill="#1f2c9c"/><rect x="658.24" y="502.20" width="3.31" height="19.13" fill="#1f2c9c"/><rect x="661.24" y="502.20" width="3.31" height="19.13" fill="#151a6a"/><rect x="664.25" y="502.20" width="9.33" height="19.13" fill="#3a2391"/><rect x="673.28" y="502.20" width="3.31" height="19.13" fill="#1f2c9c"/><rect x="676.29" y="502.20" width="6.32" height="19.13" fill="#1f2c9c"/><rect x="682.30" y="502.20" width="3.31" height="19.13" fill="#3a2391"/><rect x="685.31" y="502.20" width="3.31" height="19.13" fill="#3a2391"/><rect x="688.32" y="502.20" width="3.31" height="19.13" fill="#3a2391"/><rect x="691.33" y="502.20" width="3.31" height="19.13" fill="#5237d2"/><rect x="694.34" y="502.20" width="3.31" height="19.13" fill="#1f2c9c"/><rect x="697.34" y="502.20" width="6.32" height="19.13" fill="#4628b0"/><rect x="703.36" y="502.20" width="3.31" height="19.13" fill="#5237d2"/><rect x="706.37" y="502.20" width="6.32" height="19.13" fill="#3a2391"/><rect x="712.39" y="502.20" width="3.31" height="19.13" fill="#4628b0"/><rect x="715.39" y="502.20" width="3.31" height="19.13" fill="#4628b0"/><rect x="718.40" y="502.20" width="3.31" height="19.13" fill="#151a6a"/><rect x="721.41" y="502.20" width="6.32" height="19.13" fill="#3a2391"/><rect x="727.43" y="502.20" width="3.31" height="19.13" fill="#1f2c9c"/><rect x="730.44" y="502.20" width="3.31" height="19.13" fill="#1f2c9c"/><rect x="733.45" y="502.20" width="3.31" height="19.13" fill="#4628b0"/><rect x="736.45" y="502.20" width="3.31" height="19.13" fill="#4628b0"/><rect x="739.46" y="502.20" width="3.31" height="19.13" fill="#1f2c9c"/><rect x="742.47" y="502.20" width="3.31" height="19.13" fill="#3a2391"/><rect x="745.48" y="502.20" width="6.32" height="19.13" fill="#4628b0"/><rect x="751.50" y="502.20" width="3.31" height="19.13" fill="#3a2391"/><rect x="754.50" y="502.20" width="3.31" height="19.13" fill="#5237d2"/><rect x="757.51" y="502.20" width="3.31" height="19.13" fill="#3a2391"/><rect x="760.52" y="502.20" width="6.32" height="19.13" fill="#5237d2"/><rect x="766.54" y="502.20" width="6.32" height="19.13" fill="#3a2391"/><rect x="772.55" y="502.20" width="6.32" height="19.13" fill="#3a2391"/><rect x="778.57" y="502.20" width="3.31" height="19.13" fill="#151a6a"/><rect x="781.58" y="502.20" width="3.31" height="19.13" fill="#3a2391"/><rect x="784.59" y="502.20" width="3.31" height="19.13" fill="#3a2391"/><rect x="787.60" y="502.20" width="3.31" height="19.13" fill="#3a2391"/><rect x="790.61" y="502.20" width="6.32" height="19.13" fill="#3a2391"/><rect x="796.62" y="502.20" width="9.33" height="19.13" fill="#3a2391"/><rect x="805.65" y="502.20" width="3.31" height="19.13" fill="#4628b0"/><rect x="808.66" y="502.20" width="6.32" height="19.13" fill="#221660"/><rect x="814.67" y="502.20" width="3.31" height="19.13" fill="#4628b0"/><rect x="817.68" y="502.20" width="3.31" height="19.13" fill="#1f2c9c"/><rect x="820.69" y="502.20" width="3.31" height="19.13" fill="#1f2c9c"/><rect x="823.70" y="502.20" width="9.33" height="19.13" fill="#3a2391"/><rect x="832.72" y="502.20" width="3.31" height="19.13" fill="#3a2391"/><rect x="835.73" y="502.20" width="3.31" height="19.13" fill="#5237d2"/><rect x="838.74" y="502.20" width="3.31" height="19.13" fill="#4628b0"/><rect x="841.75" y="502.20" width="3.31" height="19.13" fill="#151a6a"/><rect x="844.76" y="502.20" width="3.31" height="19.13" fill="#1f2c9c"/><rect x="847.76" y="502.20" width="9.33" height="19.13" fill="#3a2391"/><rect x="856.79" y="502.20" width="3.31" height="19.13" fill="#151a6a"/><rect x="859.80" y="502.20" width="6.32" height="19.13" fill="#3a2391"/><rect x="865.82" y="502.20" width="3.31" height="19.13" fill="#221660"/><rect x="868.82" y="502.20" width="3.31" height="19.13" fill="#4628b0"/><rect x="871.83" y="502.20" width="6.32" height="19.13" fill="#3a2391"/><rect x="877.85" y="502.20" width="6.32" height="19.13" fill="#3a2391"/><rect x="883.87" y="502.20" width="3.31" height="19.13" fill="#1f2c9c"/><rect x="886.87" y="502.20" width="3.31" height="19.13" fill="#4628b0"/><rect x="889.88" y="502.20" width="6.32" height="19.13" fill="#3a2391"/><rect x="895.90" y="502.20" width="6.32" height="19.13" fill="#221660"/><rect x="901.92" y="502.20" width="6.32" height="19.13" fill="#3a2391"/><rect x="907.93" y="502.20" width="9.33" height="19.13" fill="#3a2391"/><rect x="916.96" y="502.20" width="3.31" height="19.13" fill="#1f2c9c"/><rect x="919.97" y="502.20" width="6.32" height="19.13" fill="#3a2391"/><rect x="925.98" y="502.20" width="6.32" height="19.13" fill="#3a2391"/><rect x="574.00" y="521.02" width="6.32" height="19.13" fill="#1e88e5"/><rect x="580.02" y="521.02" width="3.31" height="19.13" fill="#1e88e5"/><rect x="583.03" y="521.02" width="3.31" height="19.13" fill="#4a9ff0"/><rect x="586.03" y="521.02" width="3.31" height="19.13" fill="#1e88e5"/><rect x="589.04" y="521.02" width="3.31" height="19.13" fill="#22aac5"/><rect x="592.05" y="521.02" width="3.31" height="19.13" fill="#4a9ff0"/><rect x="595.06" y="521.02" width="3.31" height="19.13" fill="#22aac5"/><rect x="598.07" y="521.02" width="6.32" height="19.13" fill="#1e88e5"/><rect x="604.08" y="521.02" width="3.31" height="19.13" fill="#22aac5"/><rect x="607.09" y="521.02" width="9.33" height="19.13" fill="#1e88e5"/><rect x="616.12" y="521.02" width="3.31" height="19.13" fill="#22aac5"/><rect x="619.13" y="521.02" width="3.31" height="19.13" fill="#1e88e5"/><rect x="622.13" y="521.02" width="6.32" height="19.13" fill="#1e88e5"/><rect x="628.15" y="521.02" width="6.32" height="19.13" fill="#22aac5"/><rect x="634.17" y="521.02" width="6.32" height="19.13" fill="#228b8e"/><rect x="640.18" y="521.02" width="3.31" height="19.13" fill="#228b8e"/><rect x="643.19" y="521.02" width="3.31" height="19.13" fill="#22aac5"/><rect x="646.20" y="521.02" width="6.32" height="19.13" fill="#1e88e5"/><rect x="652.22" y="521.02" width="3.31" height="19.13" fill="#228b8e"/><rect x="655.23" y="521.02" width="3.31" height="19.13" fill="#1a70cc"/><rect x="658.24" y="521.02" width="6.32" height="19.13" fill="#228b8e"/><rect x="664.25" y="521.02" width="3.31" height="19.13" fill="#4a9ff0"/><rect x="667.26" y="521.02" width="6.32" height="19.13" fill="#4a9ff0"/><rect x="673.28" y="521.02" width="3.31" height="19.13" fill="#228b8e"/><rect x="676.29" y="521.02" width="3.31" height="19.13" fill="#4a9ff0"/><rect x="679.29" y="521.02" width="3.31" height="19.13" fill="#4a9ff0"/><rect x="682.30" y="521.02" width="6.32" height="19.13" fill="#1e88e5"/><rect x="688.32" y="521.02" width="3.31" height="19.13" fill="#22aac5"/><rect x="691.33" y="521.02" width="3.31" height="19.13" fill="#1e88e5"/><rect x="694.34" y="521.02" width="6.32" height="19.13" fill="#1e88e5"/><rect x="700.35" y="521.02" width="6.32" height="19.13" fill="#4a9ff0"/><rect x="706.37" y="521.02" width="3.31" height="19.13" fill="#1e88e5"/><rect x="709.38" y="521.02" width="3.31" height="19.13" fill="#4a9ff0"/><rect x="712.39" y="521.02" width="3.31" height="19.13" fill="#228b8e"/><rect x="715.39" y="521.02" width="3.31" height="19.13" fill="#228b8e"/><rect x="718.40" y="521.02" width="9.33" height="19.13" fill="#1e88e5"/><rect x="727.43" y="521.02" width="6.32" height="19.13" fill="#1e88e5"/><rect x="733.45" y="521.02" width="3.31" height="19.13" fill="#228b8e"/><rect x="736.45" y="521.02" width="3.31" height="19.13" fill="#4a9ff0"/><rect x="739.46" y="521.02" width="3.31" height="19.13" fill="#1e88e5"/><rect x="742.47" y="521.02" width="9.33" height="19.13" fill="#1e88e5"/><rect x="751.50" y="521.02" width="3.31" height="19.13" fill="#1e88e5"/><rect x="754.50" y="521.02" width="3.31" height="19.13" fill="#4a9ff0"/><rect x="757.51" y="521.02" width="3.31" height="19.13" fill="#4a9ff0"/><rect x="760.52" y="521.02" width="3.31" height="19.13" fill="#1a70cc"/><rect x="763.53" y="521.02" width="3.31" height="19.13" fill="#1a70cc"/><rect x="766.54" y="521.02" width="6.32" height="19.13" fill="#1e88e5"/><rect x="772.55" y="521.02" width="3.31" height="19.13" fill="#22aac5"/><rect x="775.56" y="521.02" width="3.31" height="19.13" fill="#228b8e"/><rect x="778.57" y="521.02" width="6.32" height="19.13" fill="#1e88e5"/><rect x="784.59" y="521.02" width="3.31" height="19.13" fill="#1e88e5"/><rect x="787.60" y="521.02" width="9.33" height="19.13" fill="#1e88e5"/><rect x="796.62" y="521.02" width="3.31" height="19.13" fill="#1e88e5"/><rect x="799.63" y="521.02" width="3.31" height="19.13" fill="#4a9ff0"/><rect x="802.64" y="521.02" width="3.31" height="19.13" fill="#4a9ff0"/><rect x="805.65" y="521.02" width="3.31" height="19.13" fill="#228b8e"/><rect x="808.66" y="521.02" width="9.33" height="19.13" fill="#1e88e5"/><rect x="817.68" y="521.02" width="3.31" height="19.13" fill="#228b8e"/><rect x="820.69" y="521.02" width="6.32" height="19.13" fill="#1e88e5"/><rect x="826.71" y="521.02" width="3.31" height="19.13" fill="#4a9ff0"/><rect x="829.71" y="521.02" width="6.32" height="19.13" fill="#1e88e5"/><rect x="835.73" y="521.02" width="3.31" height="19.13" fill="#1e88e5"/><rect x="838.74" y="521.02" width="3.31" height="19.13" fill="#228b8e"/><rect x="841.75" y="521.02" width="3.31" height="19.13" fill="#4a9ff0"/><rect x="844.76" y="521.02" width="6.32" height="19.13" fill="#1e88e5"/><rect x="850.77" y="521.02" width="3.31" height="19.13" fill="#1e88e5"/><rect x="853.78" y="521.02" width="6.32" height="19.13" fill="#228b8e"/><rect x="859.80" y="521.02" width="3.31" height="19.13" fill="#1e88e5"/><rect x="862.81" y="521.02" width="3.31" height="19.13" fill="#228b8e"/><rect x="865.82" y="521.02" width="3.31" height="19.13" fill="#1a70cc"/><rect x="868.82" y="521.02" width="6.32" height="19.13" fill="#1a70cc"/><rect x="874.84" y="521.02" width="6.32" height="19.13" fill="#1a70cc"/><rect x="880.86" y="521.02" width="3.31" height="19.13" fill="#3cc4d8"/><rect x="883.87" y="521.02" width="3.31" height="19.13" fill="#4a9ff0"/><rect x="886.87" y="521.02" width="9.33" height="19.13" fill="#1e88e5"/><rect x="895.90" y="521.02" width="6.32" height="19.13" fill="#22aac5"/><rect x="901.92" y="521.02" width="3.31" height="19.13" fill="#4a9ff0"/><rect x="904.92" y="521.02" width="6.32" height="19.13" fill="#1a70cc"/><rect x="910.94" y="521.02" width="3.31" height="19.13" fill="#228b8e"/><rect x="913.95" y="521.02" width="6.32" height="19.13" fill="#22aac5"/><rect x="919.97" y="521.02" width="6.32" height="19.13" fill="#22aac5"/><rect x="925.98" y="521.02" width="3.31" height="19.13" fill="#1e88e5"/><rect x="928.99" y="521.02" width="3.31" height="19.13" fill="#4a9ff0"/><rect x="574.00" y="539.85" width="3.31" height="19.13" fill="#4a9ff0"/><rect x="577.01" y="539.85" width="3.31" height="19.13" fill="#1e88e5"/><rect x="580.02" y="539.85" width="6.32" height="19.13" fill="#4a9ff0"/><rect x="586.03" y="539.85" width="9.33" height="19.13" fill="#1e88e5"/><rect x="595.06" y="539.85" width="3.31" height="19.13" fill="#22aac5"/><rect x="598.07" y="539.85" width="6.32" height="19.13" fill="#1e88e5"/><rect x="604.08" y="539.85" width="3.31" height="19.13" fill="#1e88e5"/><rect x="607.09" y="539.85" width="3.31" height="19.13" fill="#22aac5"/><rect x="610.10" y="539.85" width="3.31" height="19.13" fill="#4a9ff0"/><rect x="613.11" y="539.85" width="3.31" height="19.13" fill="#1e88e5"/><rect x="616.12" y="539.85" width="6.32" height="19.13" fill="#3cc4d8"/><rect x="622.13" y="539.85" width="9.33" height="19.13" fill="#1e88e5"/><rect x="631.16" y="539.85" width="6.32" height="19.13" fill="#22aac5"/><rect x="637.18" y="539.85" width="9.33" height="19.13" fill="#1e88e5"/><rect x="646.20" y="539.85" width="3.31" height="19.13" fill="#1a70cc"/><rect x="649.21" y="539.85" width="3.31" height="19.13" fill="#1a70cc"/><rect x="652.22" y="539.85" width="3.31" height="19.13" fill="#1a70cc"/><rect x="655.23" y="539.85" width="3.31" height="19.13" fill="#228b8e"/><rect x="658.24" y="539.85" width="3.31" height="19.13" fill="#1a70cc"/><rect x="661.24" y="539.85" width="3.31" height="19.13" fill="#4a9ff0"/><rect x="664.25" y="539.85" width="3.31" height="19.13" fill="#4a9ff0"/><rect x="667.26" y="539.85" width="3.31" height="19.13" fill="#1e88e5"/><rect x="670.27" y="539.85" width="9.33" height="19.13" fill="#1e88e5"/><rect x="679.29" y="539.85" width="3.31" height="19.13" fill="#228b8e"/><rect x="682.30" y="539.85" width="3.31" height="19.13" fill="#1a70cc"/><rect x="685.31" y="539.85" width="9.33" height="19.13" fill="#1e88e5"/><rect x="694.34" y="539.85" width="3.31" height="19.13" fill="#4a9ff0"/><rect x="697.34" y="539.85" width="3.31" height="19.13" fill="#1a70cc"/><rect x="700.35" y="539.85" width="6.32" height="19.13" fill="#1a70cc"/><rect x="706.37" y="539.85" width="3.31" height="19.13" fill="#4a9ff0"/><rect x="709.38" y="539.85" width="6.32" height="19.13" fill="#4a9ff0"/><rect x="715.39" y="539.85" width="3.31" height="19.13" fill="#1e88e5"/><rect x="718.40" y="539.85" width="6.32" height="19.13" fill="#1a70cc"/><rect x="724.42" y="539.85" width="6.32" height="19.13" fill="#4a9ff0"/><rect x="730.44" y="539.85" width="6.32" height="19.13" fill="#228b8e"/><rect x="736.45" y="539.85" width="6.32" height="19.13" fill="#228b8e"/><rect x="742.47" y="539.85" width="3.31" height="19.13" fill="#4a9ff0"/><rect x="745.48" y="539.85" width="6.32" height="19.13" fill="#1e88e5"/><rect x="751.50" y="539.85" width="6.32" height="19.13" fill="#4a9ff0"/><rect x="757.51" y="539.85" width="3.31" height="19.13" fill="#4a9ff0"/><rect x="760.52" y="539.85" width="3.31" height="19.13" fill="#1e88e5"/><rect x="763.53" y="539.85" width="6.32" height="19.13" fill="#1e88e5"/><rect x="769.55" y="539.85" width="3.31" height="19.13" fill="#228b8e"/><rect x="772.55" y="539.85" width="9.33" height="19.13" fill="#1e88e5"/><rect x="781.58" y="539.85" width="3.31" height="19.13" fill="#22aac5"/><rect x="784.59" y="539.85" width="3.31" height="19.13" fill="#1e88e5"/><rect x="787.60" y="539.85" width="3.31" height="19.13" fill="#3cc4d8"/><rect x="790.61" y="539.85" width="6.32" height="19.13" fill="#1e88e5"/><rect x="796.62" y="539.85" width="3.31" height="19.13" fill="#1e88e5"/><rect x="799.63" y="539.85" width="3.31" height="19.13" fill="#1a70cc"/><rect x="802.64" y="539.85" width="6.32" height="19.13" fill="#1e88e5"/><rect x="808.66" y="539.85" width="3.31" height="19.13" fill="#1a70cc"/><rect x="811.66" y="539.85" width="9.33" height="19.13" fill="#1e88e5"/><rect x="820.69" y="539.85" width="6.32" height="19.13" fill="#1e88e5"/><rect x="826.71" y="539.85" width="9.33" height="19.13" fill="#1e88e5"/><rect x="835.73" y="539.85" width="6.32" height="19.13" fill="#3cc4d8"/><rect x="841.75" y="539.85" width="6.32" height="19.13" fill="#1e88e5"/><rect x="847.76" y="539.85" width="3.31" height="19.13" fill="#1a70cc"/><rect x="850.77" y="539.85" width="3.31" height="19.13" fill="#1e88e5"/><rect x="853.78" y="539.85" width="6.32" height="19.13" fill="#1e88e5"/><rect x="859.80" y="539.85" width="6.32" height="19.13" fill="#1e88e5"/><rect x="865.82" y="539.85" width="6.32" height="19.13" fill="#1a70cc"/><rect x="871.83" y="539.85" width="6.32" height="19.13" fill="#1e88e5"/><rect x="877.85" y="539.85" width="9.33" height="19.13" fill="#1e88e5"/><rect x="886.87" y="539.85" width="6.32" height="19.13" fill="#1e88e5"/><rect x="892.89" y="539.85" width="6.32" height="19.13" fill="#3cc4d8"/><rect x="898.91" y="539.85" width="3.31" height="19.13" fill="#4a9ff0"/><rect x="901.92" y="539.85" width="9.33" height="19.13" fill="#1e88e5"/><rect x="910.94" y="539.85" width="6.32" height="19.13" fill="#1a70cc"/><rect x="916.96" y="539.85" width="3.31" height="19.13" fill="#228b8e"/><rect x="919.97" y="539.85" width="6.32" height="19.13" fill="#1e88e5"/><rect x="925.98" y="539.85" width="3.31" height="19.13" fill="#1a70cc"/><rect x="928.99" y="539.85" width="3.31" height="19.13" fill="#4a9ff0"/><rect x="574.00" y="558.67" width="3.31" height="19.13" fill="#4a9ff0"/><rect x="577.01" y="558.67" width="3.31" height="19.13" fill="#1a70cc"/><rect x="580.02" y="558.67" width="9.33" height="19.13" fill="#1e88e5"/><rect x="589.04" y="558.67" width="9.33" height="19.13" fill="#1e88e5"/><rect x="598.07" y="558.67" width="3.31" height="19.13" fill="#22aac5"/><rect x="601.08" y="558.67" width="3.31" height="19.13" fill="#228b8e"/><rect x="604.08" y="558.67" width="6.32" height="19.13" fill="#1e88e5"/><rect x="610.10" y="558.67" width="6.32" height="19.13" fill="#1a70cc"/><rect x="616.12" y="558.67" width="3.31" height="19.13" fill="#4a9ff0"/><rect x="619.13" y="558.67" width="3.31" height="19.13" fill="#22aac5"/><rect x="622.13" y="558.67" width="3.31" height="19.13" fill="#4a9ff0"/><rect x="625.14" y="558.67" width="3.31" height="19.13" fill="#1e88e5"/><rect x="628.15" y="558.67" width="3.31" height="19.13" fill="#1a70cc"/><rect x="631.16" y="558.67" width="6.32" height="19.13" fill="#1e88e5"/><rect x="637.18" y="558.67" width="6.32" height="19.13" fill="#4a9ff0"/><rect x="643.19" y="558.67" width="3.31" height="19.13" fill="#1a70cc"/><rect x="646.20" y="558.67" width="9.33" height="19.13" fill="#1e88e5"/><rect x="655.23" y="558.67" width="3.31" height="19.13" fill="#228b8e"/><rect x="658.24" y="558.67" width="3.31" height="19.13" fill="#1e88e5"/><rect x="661.24" y="558.67" width="6.32" height="19.13" fill="#228b8e"/><rect x="667.26" y="558.67" width="3.31" height="19.13" fill="#1e88e5"/><rect x="670.27" y="558.67" width="3.31" height="19.13" fill="#22aac5"/><rect x="673.28" y="558.67" width="3.31" height="19.13" fill="#4a9ff0"/><rect x="676.29" y="558.67" width="3.31" height="19.13" fill="#3cc4d8"/><rect x="679.29" y="558.67" width="3.31" height="19.13" fill="#1a70cc"/><rect x="682.30" y="558.67" width="6.32" height="19.13" fill="#1a70cc"/><rect x="688.32" y="558.67" width="6.32" height="19.13" fill="#1a70cc"/><rect x="694.34" y="558.67" width="3.31" height="19.13" fill="#1e88e5"/><rect x="697.34" y="558.67" width="9.33" height="19.13" fill="#1e88e5"/><rect x="706.37" y="558.67" width="3.31" height="19.13" fill="#1e88e5"/><rect x="709.38" y="558.67" width="3.31" height="19.13" fill="#1e88e5"/><rect x="712.39" y="558.67" width="3.31" height="19.13" fill="#22aac5"/><rect x="715.39" y="558.67" width="9.33" height="19.13" fill="#1e88e5"/><rect x="724.42" y="558.67" width="3.31" height="19.13" fill="#1a70cc"/><rect x="727.43" y="558.67" width="3.31" height="19.13" fill="#1e88e5"/><rect x="730.44" y="558.67" width="6.32" height="19.13" fill="#4a9ff0"/><rect x="736.45" y="558.67" width="3.31" height="19.13" fill="#228b8e"/><rect x="739.46" y="558.67" width="3.31" height="19.13" fill="#4a9ff0"/><rect x="742.47" y="558.67" width="3.31" height="19.13" fill="#1e88e5"/><rect x="745.48" y="558.67" width="6.32" height="19.13" fill="#3cc4d8"/><rect x="751.50" y="558.67" width="3.31" height="19.13" fill="#228b8e"/><rect x="754.50" y="558.67" width="6.32" height="19.13" fill="#4a9ff0"/><rect x="760.52" y="558.67" width="6.32" height="19.13" fill="#228b8e"/><rect x="766.54" y="558.67" width="6.32" height="19.13" fill="#1e88e5"/><rect x="772.55" y="558.67" width="3.31" height="19.13" fill="#1e88e5"/><rect x="775.56" y="558.67" width="3.31" height="19.13" fill="#1e88e5"/><rect x="778.57" y="558.67" width="6.32" height="19.13" fill="#1e88e5"/><rect x="784.59" y="558.67" width="3.31" height="19.13" fill="#228b8e"/><rect x="787.60" y="558.67" width="6.32" height="19.13" fill="#1a70cc"/><rect x="793.61" y="558.67" width="3.31" height="19.13" fill="#1a70cc"/><rect x="796.62" y="558.67" width="3.31" height="19.13" fill="#1e88e5"/><rect x="799.63" y="558.67" width="9.33" height="19.13" fill="#1e88e5"/><rect x="808.66" y="558.67" width="6.32" height="19.13" fill="#1e88e5"/><rect x="814.67" y="558.67" width="3.31" height="19.13" fill="#22aac5"/><rect x="817.68" y="558.67" width="3.31" height="19.13" fill="#22aac5"/><rect x="820.69" y="558.67" width="6.32" height="19.13" fill="#1e88e5"/><rect x="826.71" y="558.67" width="3.31" height="19.13" fill="#4a9ff0"/><rect x="829.71" y="558.67" width="6.32" height="19.13" fill="#4a9ff0"/><rect x="835.73" y="558.67" width="3.31" height="19.13" fill="#4a9ff0"/><rect x="838.74" y="558.67" width="6.32" height="19.13" fill="#228b8e"/><rect x="844.76" y="558.67" width="3.31" height="19.13" fill="#22aac5"/><rect x="847.76" y="558.67" width="3.31" height="19.13" fill="#1a70cc"/><rect x="850.77" y="558.67" width="6.32" height="19.13" fill="#228b8e"/><rect x="856.79" y="558.67" width="3.31" height="19.13" fill="#1a70cc"/><rect x="859.80" y="558.67" width="3.31" height="19.13" fill="#1a70cc"/><rect x="862.81" y="558.67" width="3.31" height="19.13" fill="#1e88e5"/><rect x="865.82" y="558.67" width="9.33" height="19.13" fill="#1e88e5"/><rect x="874.84" y="558.67" width="3.31" height="19.13" fill="#22aac5"/><rect x="877.85" y="558.67" width="3.31" height="19.13" fill="#3cc4d8"/><rect x="880.86" y="558.67" width="3.31" height="19.13" fill="#1e88e5"/><rect x="883.87" y="558.67" width="3.31" height="19.13" fill="#1a70cc"/><rect x="886.87" y="558.67" width="3.31" height="19.13" fill="#1a70cc"/><rect x="889.88" y="558.67" width="9.33" height="19.13" fill="#1e88e5"/><rect x="898.91" y="558.67" width="3.31" height="19.13" fill="#228b8e"/><rect x="901.92" y="558.67" width="3.31" height="19.13" fill="#228b8e"/><rect x="904.92" y="558.67" width="6.32" height="19.13" fill="#22aac5"/><rect x="910.94" y="558.67" width="3.31" height="19.13" fill="#1e88e5"/><rect x="913.95" y="558.67" width="3.31" height="19.13" fill="#1e88e5"/><rect x="916.96" y="558.67" width="3.31" height="19.13" fill="#1e88e5"/><rect x="919.97" y="558.67" width="3.31" height="19.13" fill="#228b8e"/><rect x="922.97" y="558.67" width="3.31" height="19.13" fill="#4a9ff0"/><rect x="925.98" y="558.67" width="3.31" height="19.13" fill="#1e88e5"/><rect x="928.99" y="558.67" width="3.31" height="19.13" fill="#1e88e5"/><rect x="565" y="594.7" width="9" height="1" fill="#e3e3e3"/><rect x="565" y="574.1" width="9" height="1" fill="#e3e3e3"/><rect x="565" y="553.5" width="9" height="1" fill="#e3e3e3"/><rect x="565" y="532.9" width="9" height="1" fill="#e3e3e3"/><rect x="565" y="512.3" width="9" height="1" fill="#e3e3e3"/><rect x="565" y="491.7" width="9" height="1" fill="#e3e3e3"/><rect x="617.9" y="607.8" width="1" height="9" fill="#e3e3e3"/><rect x="677.3" y="607.8" width="1" height="9" fill="#e3e3e3"/><rect x="736.8" y="607.8" width="1" height="9" fill="#e3e3e3"/><rect x="796.2" y="607.8" width="1" height="9" fill="#e3e3e3"/><rect x="855.7" y="607.8" width="1" height="9" fill="#e3e3e3"/><rect x="915.1" y="607.8" width="1" height="9" fill="#e3e3e3"/></svg>
<div class="ylab" style="left:529px;top:589.4px">1K</div>
<div class="ylab" style="left:529px;top:568.8px">2K</div>
<div class="ylab" style="left:529px;top:548.2px">3K</div>
<div class="ylab" style="left:529px;top:527.6px">4K</div>
<div class="ylab" style="left:529px;top:507.0px">5K</div>
<div class="ylab" style="left:529px;top:486.4px">6K</div>
<div class="xlab" style="left:598.4px;top:621px">16:35</div>
<div class="xlab" style="left:657.8px;top:621px">16:40</div>
<div class="xlab" style="left:717.3px;top:621px">16:45</div>
<div class="xlab" style="left:776.7px;top:621px">16:50</div>
<div class="xlab" style="left:836.2px;top:621px">16:55</div>
<div class="xlab" style="left:895.6px;top:621px">17:00</div>
<div class="sq" style="left:949px;top:477px;background:#3b2690"></div><div class="leg" style="left:964.5px;top:479px">&lt;868</div>
<div class="sq" style="left:949px;top:497px;background:#2a24a0"></div><div class="leg" style="left:964.5px;top:499px">&lt;744</div>
<div class="sq" style="left:949px;top:517px;background:#1f4db5"></div><div class="leg" style="left:964.5px;top:519px">&lt;620</div>
<div class="sq" style="left:949px;top:537px;background:#1a73c8"></div><div class="leg" style="left:964.5px;top:539px">&lt;496</div>
<div class="sq" style="left:949px;top:557px;background:#45c4dc"></div><div class="leg" style="left:964.5px;top:559px">&lt;372</div>
<div class="sq" style="left:949px;top:577px;background:#8ddfd0"></div><div class="leg" style="left:964.5px;top:579px">&lt;248</div>
<div class="sq" style="left:949px;top:597px;background:#d3ede2"></div><div class="leg" style="left:964.5px;top:599px">&lt;124</div>

<div class="card" style="left:512px;top:689px;width:496px;height:100px"></div>
<div class="t" style="left:522px;top:712px;font-size:12px;font-weight:700;color:#1e293b;line-height:14px">Topk(server_datacenter)</div>
<div class="t" style="left:530px;top:746px;font-family:&quot;Liberation Mono&quot;,monospace;font-size:11px;color:#475569;line-height:12px">Count</div>
<div class="t" style="left:630px;top:746px;font-family:&quot;Liberation Mono&quot;,monospace;font-size:11px;color:#475569;line-height:12px">server_datacenter</div>
<div class="abs" style="left:522px;top:764px;width:476px;height:1px;background:#e2e8f0"></div>
<div class="abs" style="left:522px;top:765px;width:95px;height:10px;background:#fbe6f6"></div>
<div class="abs" style="left:622px;top:765px;width:1px;height:10px;background:#e2e8f0"></div>
</div></body></html>
